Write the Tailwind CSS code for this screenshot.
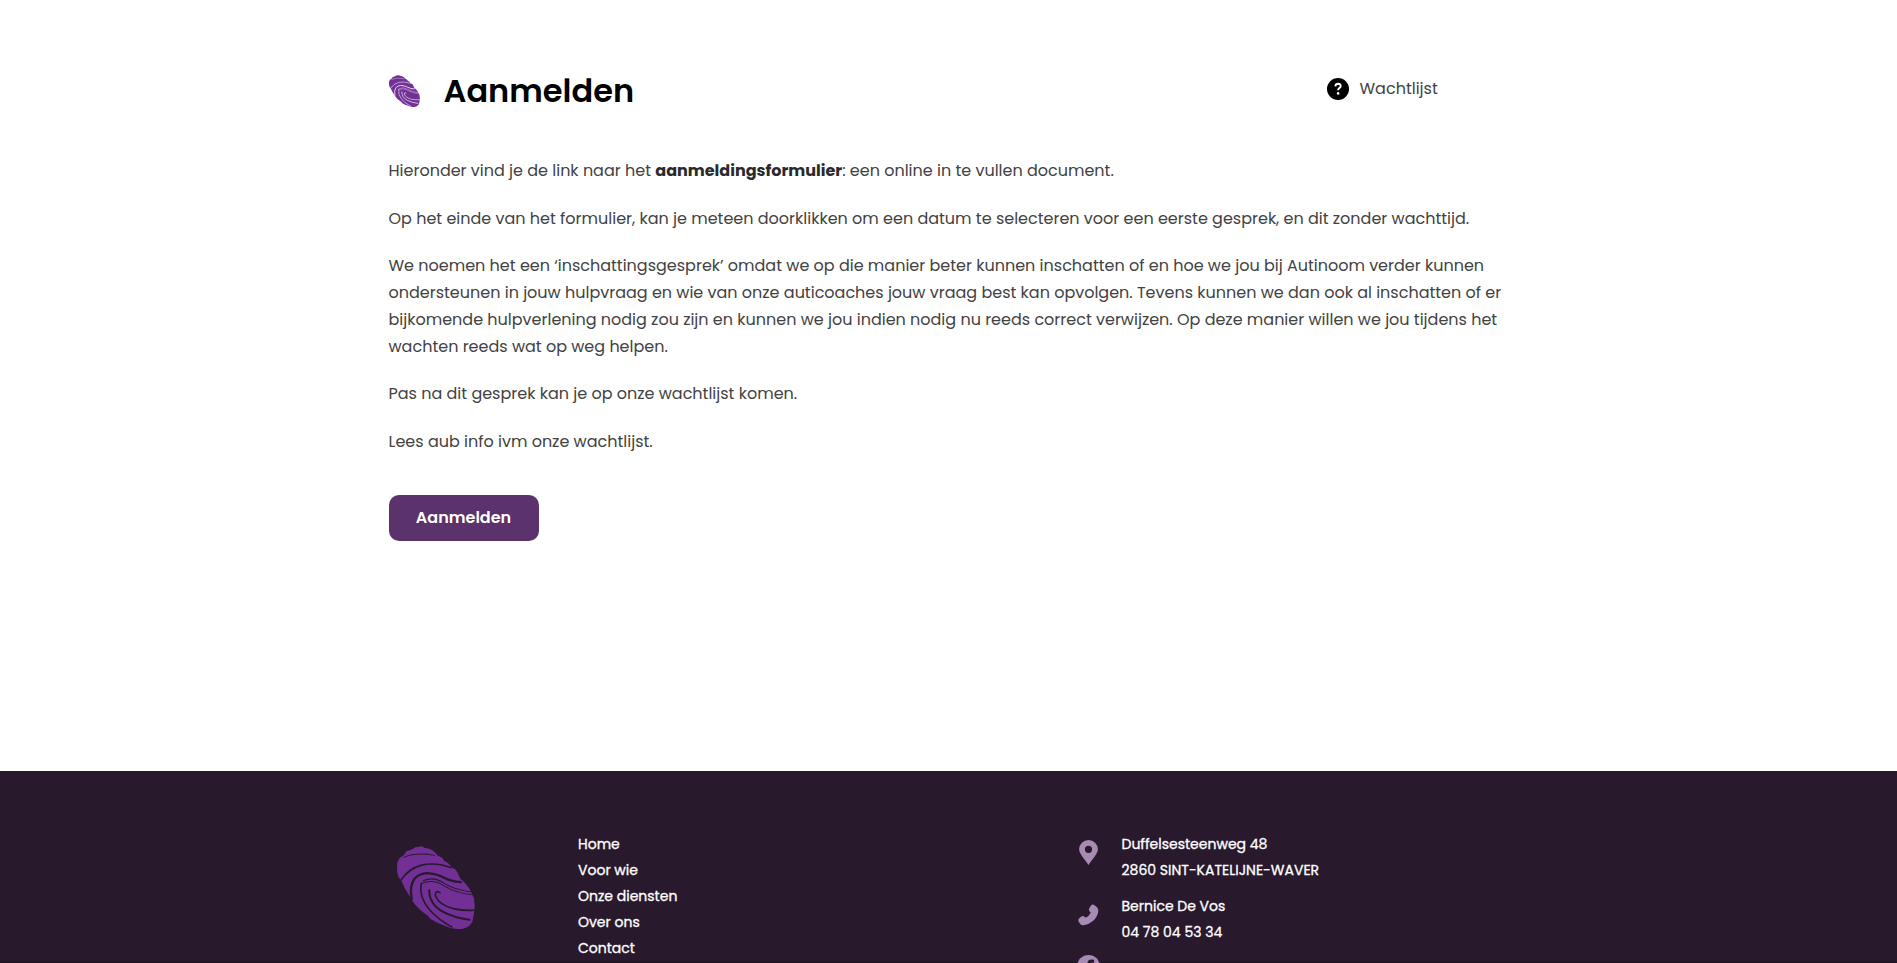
<!DOCTYPE html>
<html lang="nl">
<head>
<meta charset="utf-8">
<title>Aanmelden</title>
<script src="https://cdn.jsdelivr.net/npm/@tailwindcss/browser@4"></script>
</head>
<body class="flex h-screen flex-col overflow-hidden bg-white font-['Poppins','Inter',sans-serif] [font-feature-settings:'cv11'] text-[#424242]">
<svg class="hidden">
  <symbol id="finger" viewBox="52 48 232 248" preserveAspectRatio="none">
    <path fill="#722f96" d="M53 98Q56 84 72 76L80 64L98 58L106 52L127 49L134 54Q150 54 164 66L172 76L187 84L192 92Q207 98 214 112L226 118Q234 128 240 145Q262 164 274 187Q284 206 283 230Q281 256 276 275Q266 292 245 296Q215 298 190 285Q166 276 152 266L143 256Q108 232 96 208L76 176L66 154L56 140Q50 120 53 98Z"/>
    <g fill="none" stroke="currentColor" stroke-linecap="round">
      <path stroke-width="3" d="M72 82Q110 66 164 76"/>
      <path stroke-width="5" d="M64 150Q85 116 125 105Q165 96 212 112"/>
      <path stroke-width="7" d="M96 206Q88 168 104 146Q118 130 140 129Q170 130 192 143Q212 154 242 156"/>
      <path stroke-width="3" d="M130 152Q160 138 190 158Q224 180 278 186"/>
      <path stroke-width="3" d="M124 160Q160 146 192 167Q230 190 281 194"/>
      <path stroke-width="5" d="M124 160Q116 200 150 240Q175 268 215 290"/>
      <path stroke-width="6" d="M148 180Q148 222 188 244Q220 262 268 268"/>
      <path stroke-width="5" d="M180 188Q166 178 166 196Q178 226 222 236Q250 242 281 240"/>
    </g>
  </symbol>
</svg>

<main class="h-[771px] shrink-0 pt-[70px] pl-[388px]">
  <div class="flex h-[42px] items-center">
    <svg class="-mt-px ml-px h-[32px] w-[31px] text-[#e8dcf0]"><use href="#finger"/></svg>
    <h1 class="ml-[23.5px] w-[883px] text-[32px] leading-[42px] font-semibold text-black">Aanmelden</h1>
    <a class="-mt-1 flex items-center gap-[11px]">
      <svg class="size-[22px]" viewBox="0 0 22 22"><circle cx="11" cy="11" r="11" fill="#000"/><path d="M8.3 8.3Q8.6 5.8 11.1 5.8Q13.7 5.9 13.7 8.1Q13.7 9.4 12.3 10.1Q11.1 10.8 11.1 12.2" fill="none" stroke="#fff" stroke-width="1.9"/><circle cx="11.1" cy="15.4" r="1.3" fill="#fff"/></svg>
      <span class="text-[16px]">Wachtlijst</span>
    </a>
  </div>

  <div class="mt-[45px] ml-[0.5px] text-[16px] leading-[27px] whitespace-nowrap">
    <p>Hieronder vind je de link naar het <strong class="font-bold text-[#2a2a2a]">aanmeldingsformulier</strong>: een online in te vullen document.</p>
    <p class="mt-[21px]">Op het einde van het formulier, kan je meteen doorklikken om een datum te selecteren voor een eerste gesprek, en dit zonder wachttijd.</p>
    <p class="mt-5">We noemen het een ‘inschattingsgesprek’ omdat we op die manier beter kunnen inschatten of en hoe we jou bij Autinoom verder kunnen<br>ondersteunen in jouw hulpvraag en wie van onze auticoaches jouw vraag best kan opvolgen. Tevens kunnen we dan ook al inschatten of er<br>bijkomende hulpverlening nodig zou zijn en kunnen we jou indien nodig nu reeds correct verwijzen. Op deze manier willen we jou tijdens het<br>wachten reeds wat op weg helpen.</p>
    <p class="mt-5">Pas na dit gesprek kan je op onze wachtlijst komen.</p>
    <p class="mt-[21px]">Lees aub info ivm onze wachtlijst.</p>
  </div>

  <a class="mt-10 ml-px flex h-[46px] w-[150px] items-center justify-center rounded-[10px] bg-[#5b326b] pr-px text-[16px] font-semibold text-white">Aanmelden</a>
</main>

<footer class="flex h-[192px] shrink-0 items-start border-b border-[#1d1220] bg-[#29192d] pt-[60px] pl-[397px] text-[14px] leading-[26px] whitespace-nowrap text-white">
  <svg class="mt-[15px] h-[83px] w-[78px] text-[#29192d]"><use href="#finger"/></svg>
  <nav class="ml-[103px] flex w-[499px] flex-col [-webkit-text-stroke:0.3px_white]">
    <a>Home</a>
    <a>Voor wie</a>
    <a>Onze diensten</a>
    <a>Over ons</a>
    <a>Contact</a>
  </nav>
  <div class="flex flex-col gap-[10px] text-[#a78bb3]">
    <div class="flex gap-[20.5px]">
      <svg class="mt-2 h-[26px] w-6" viewBox="0 0 24 26"><path fill="currentColor" fill-rule="evenodd" d="M11.5 1A9.4 9.4 0 0 0 2.1 10.3C2.1 14.5 7 19.5 11.5 26C16 19.5 20.9 14.5 20.9 10.3A9.4 9.4 0 0 0 11.5 1ZM11.5 6.7A3.6 3.6 0 1 1 11.5 13.9A3.6 3.6 0 1 1 11.5 6.7Z"/></svg>
      <div class="text-white [-webkit-text-stroke:0.3px_white]"><p>Duffelsesteenweg 48</p><p>2860 SINT-KATELIJNE-WAVER</p></div>
    </div>
    <div class="flex gap-[20.5px]">
      <svg class="mt-[11px] h-[22px] w-6" viewBox="0 0 24 22"><path fill="currentColor" d="M14.4 1Q15.8 0 17.2 .9L20.2 3.4Q21.5 4.8 21.3 7.4Q20.6 12.6 16.2 16.7Q11.8 20.6 6.6 21.2Q4.4 21.4 3.2 20L1.5 17.2Q.9 15.6 2 14.5L4.4 12.5Q5.9 11.5 7.3 12.6L8.6 13.8Q12.2 12.2 13.8 8.6L12.6 7.4Q11.4 5.9 12.2 4.3Z"/></svg>
      <div class="text-white [-webkit-text-stroke:0.3px_white]"><p>Bernice De Vos</p><p>04 78 04 53 34</p></div>
    </div>
    <svg class="size-[23px]" viewBox="0 0 23 23"><circle cx="11.5" cy="11.5" r="11.5" fill="currentColor"/><path fill="#29192d" d="M10.3 23V14.7H7.6V11.5H10.3V9.1Q10.3 4.6 14.5 4.6L17.1 4.8V7.8H15.5Q14 7.8 14 9.3V11.5H16.8L16.3 14.7H14V23Z"/></svg>
  </div>
</footer>
</body>
</html>
